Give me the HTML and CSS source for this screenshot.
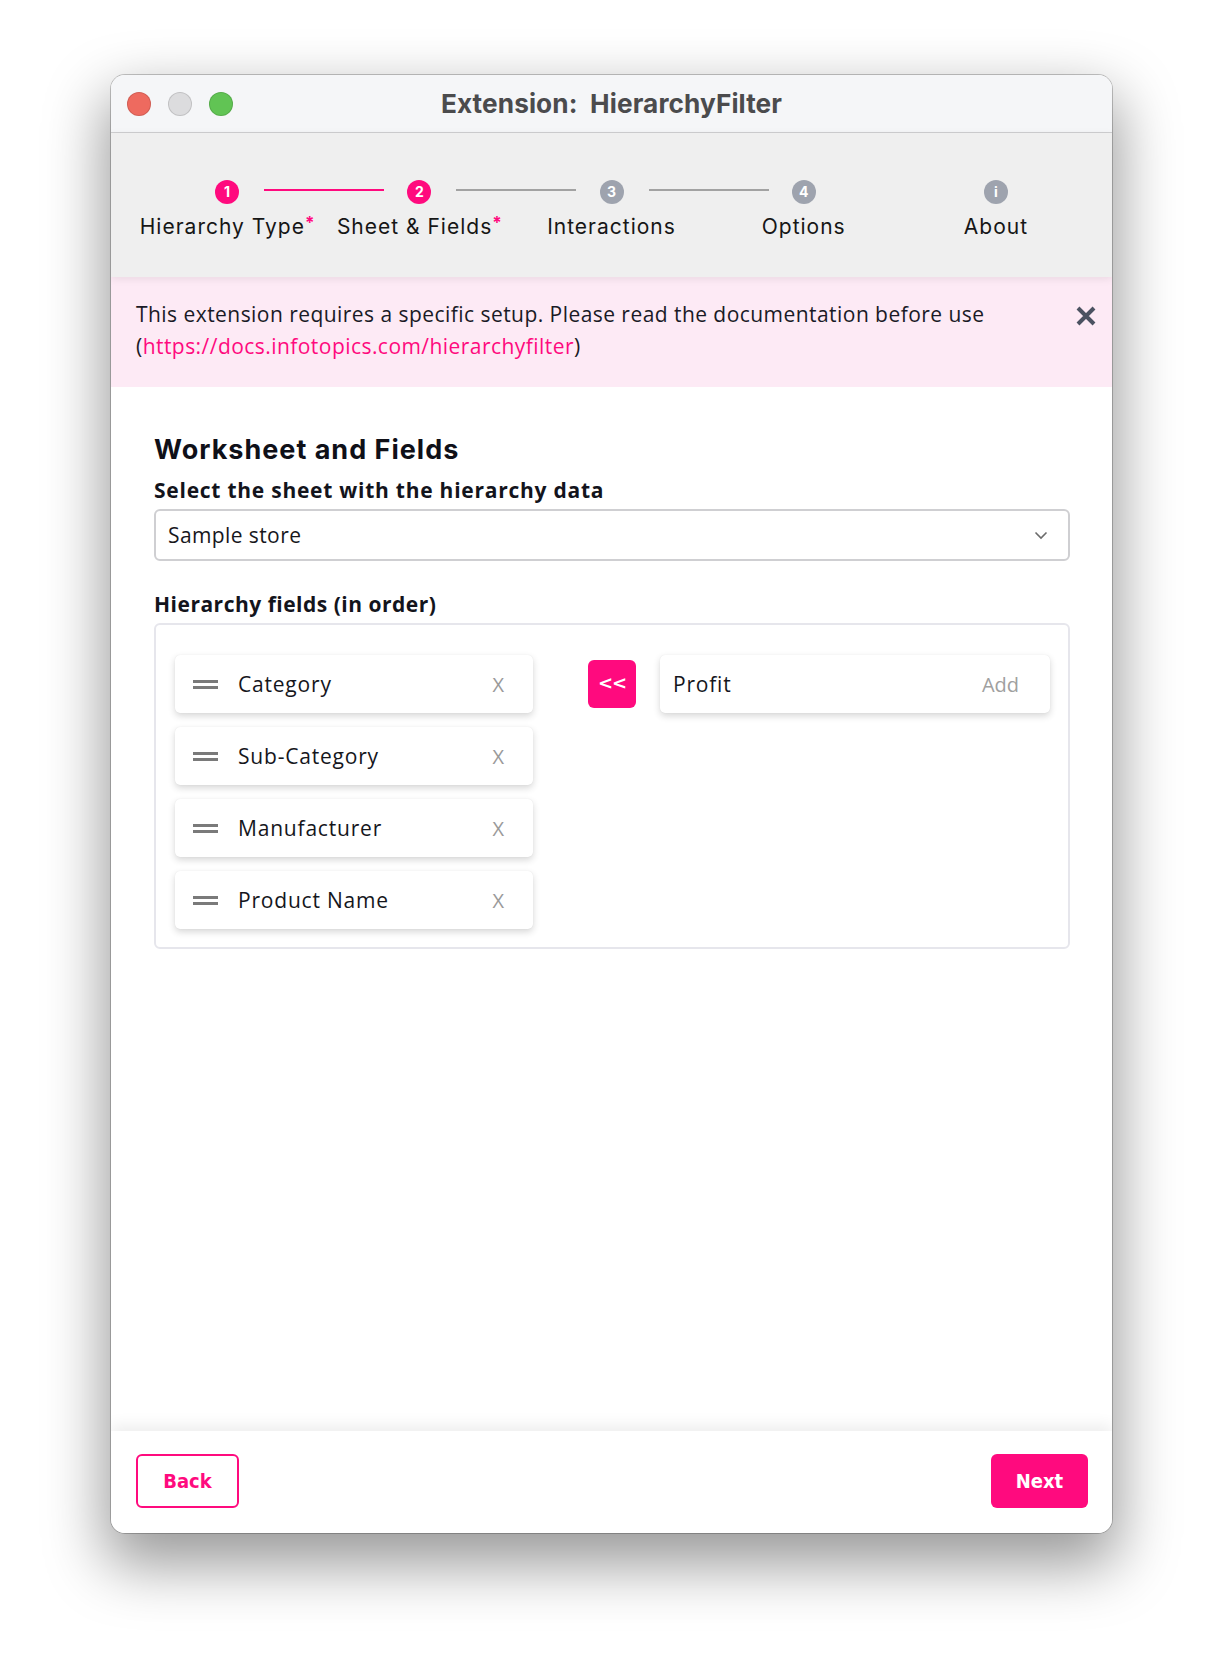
FILE: index.html
```html
<!DOCTYPE html>
<html lang="en">
<head>
<meta charset="utf-8">
<title>Extension: HierarchyFilter</title>
<link rel="stylesheet" href="styles.css">
</head>
<body>
<div class="window">
  <header class="titlebar">
    <div class="lights">
      <span class="light red"></span>
      <span class="light gray"></span>
      <span class="light green"></span>
    </div>
    <div class="title">Extension:&nbsp; HierarchyFilter</div>
  </header>

  <nav class="stepper">
    <div class="step active line-active">
      <div class="dot">1</div>
      <div class="step-label">Hierarchy Type<span class="req">*</span></div>
    </div>
    <div class="step active line">
      <div class="dot">2</div>
      <div class="step-label">Sheet &amp; Fields<span class="req">*</span></div>
    </div>
    <div class="step line">
      <div class="dot">3</div>
      <div class="step-label">Interactions</div>
    </div>
    <div class="step">
      <div class="dot">4</div>
      <div class="step-label">Options</div>
    </div>
    <div class="step">
      <div class="dot">i</div>
      <div class="step-label">About</div>
    </div>
  </nav>

  <div class="banner">
    <p class="banner-text">This extension requires a specific setup. Please read the documentation before use<br>(<a class="link" href="#">https://docs.infotopics.com/hierarchyfilter</a>)</p>
    <button class="banner-close" aria-label="Close">
      <svg width="22" height="22" viewBox="0 0 22 22"><path d="M3 3 L19 19 M19 3 L3 19" stroke="#4b5261" stroke-width="4" stroke-linecap="butt"/></svg>
    </button>
  </div>

  <main class="content">
    <h1 class="heading">Worksheet and Fields</h1>
    <label class="label">Select the sheet with the hierarchy data</label>
    <div class="select">
      <span>Sample store</span>
      <svg class="chev" width="14" height="9" viewBox="0 0 14 9"><path d="M1.5 1.5 L7 7 L12.5 1.5" fill="none" stroke="#6b6b6b" stroke-width="1.6"/></svg>
    </div>

    <label class="label label-fields">Hierarchy fields (in order)</label>
    <div class="fields-box">
      <div class="field-list">
        <div class="field"><span class="handle"></span><span class="field-name">Category</span><span class="field-x">X</span></div>
        <div class="field"><span class="handle"></span><span class="field-name">Sub-Category</span><span class="field-x">X</span></div>
        <div class="field"><span class="handle"></span><span class="field-name">Manufacturer</span><span class="field-x">X</span></div>
        <div class="field"><span class="handle"></span><span class="field-name">Product Name</span><span class="field-x">X</span></div>
      </div>
      <button class="move-btn">&lt;&lt;</button>
      <div class="avail-list">
        <div class="field avail"><span class="field-name">Profit</span><span class="field-add">Add</span></div>
      </div>
    </div>
  </main>

  <footer class="footer">
    <button class="btn btn-outline">Back</button>
    <button class="btn btn-fill">Next</button>
  </footer>
</div>
</body>
</html>
```

FILE: styles.css
```css
* { box-sizing: border-box; }

html, body {
  margin: 0;
  background: #ffffff;
}

body {
  min-height: 1680px;
  padding: 75px 0 147px 111px;
  font-family: "Open Sans", "Noto Sans", sans-serif;
  color: #14151a;
}

.window {
  width: 1001px;
  height: 1458px;
  display: flex;
  flex-direction: column;
  background: #ffffff;
  border-radius: 14px;
  overflow: hidden;
  box-shadow: 0 0 0 1px rgba(0,0,0,0.22), 0 26px 60px 6px rgba(0,0,0,0.4);
}

/* title bar */
.titlebar {
  height: 58px;
  flex: none;
  display: flex;
  align-items: center;
  position: relative;
  background: #f5f6f8;
  border-bottom: 1px solid #cfcfd1;
}
.lights {
  display: flex;
  gap: 17px;
  padding-left: 16px;
}
.light {
  width: 24px;
  height: 24px;
  border-radius: 50%;
  display: block;
}
.light.red { background: #ee6a5f; box-shadow: inset 0 0 0 1px rgba(0,0,0,0.12); }
.light.gray { background: #dcdcde; box-shadow: inset 0 0 0 1px rgba(0,0,0,0.12); }
.light.green { background: #61c454; box-shadow: inset 0 0 0 1px rgba(0,0,0,0.12); }
.title {
  position: absolute;
  left: 0;
  right: 0;
  text-align: center;
  font-family: "Inter", "Liberation Sans", sans-serif;
  font-weight: 700;
  font-size: 26.2px;
  letter-spacing: 0.1px;
  color: #4b4b4d;
  pointer-events: none;
}

/* stepper */
.stepper {
  height: 144px;
  flex: none;
  display: flex;
  padding: 47px 20px 0;
  background: #efefef;
  position: relative;
  z-index: 2;
  box-shadow: 0 2px 8px rgba(0,0,0,0.08);
}
.step {
  flex: 1;
  display: flex;
  flex-direction: column;
  align-items: center;
  position: relative;
}
.step.line::after,
.step.line-active::after {
  content: "";
  position: absolute;
  top: 9px;
  left: calc(50% + 37px);
  width: 120px;
  height: 2px;
  background: #a2a2a2;
}
.step.line-active::after { background: #ff0a7e; }
.dot {
  width: 24px;
  height: 24px;
  border-radius: 50%;
  background: #9ea3ae;
  color: #fff;
  font-family: "Inter", "Liberation Sans", sans-serif;
  font-weight: 700;
  font-size: 14px;
  line-height: 24px;
  text-align: center;
}
.step.active .dot { background: #ff0a7e; }
.step-label {
  margin-top: 10px;
  font-family: "Inter", "Noto Sans", sans-serif;
  font-size: 21px;
  line-height: 26px;
  color: #161616;
  white-space: nowrap;
  letter-spacing: 1px;
}
.req { color: #ff0a7e; font-weight: 700; font-size: 17px; line-height: 0; vertical-align: 5px; letter-spacing: 0; }

/* banner */
.banner {
  height: 110px;
  flex: none;
  display: flex;
  justify-content: space-between;
  align-items: flex-start;
  padding: 21px 15px 0 25px;
  background: #fdeaf5;
  position: relative;
  z-index: 1;
}
.banner-text {
  margin: 0;
  font-size: 21px;
  line-height: 32px;
  letter-spacing: 0.45px;
  color: #1a1a26;
}
.link { color: #ff0a7e; text-decoration: none; }
.banner-close {
  border: 0;
  background: none;
  padding: 0;
  margin-top: 7px;
  width: 22px;
  height: 22px;
}

/* content */
.content {
  flex: 1;
  display: flex;
  flex-direction: column;
  padding: 47px 42px 0 43px;
  background: #fff;
}
.heading {
  margin: 0;
  font-family: "Inter", "Noto Sans", sans-serif;
  font-weight: 700;
  font-size: 27px;
  line-height: 32px;
  letter-spacing: 1px;
  color: #0f1018;
}
.label {
  display: block;
  margin-top: 11px;
  font-weight: 700;
  font-size: 21px;
  line-height: 26px;
  letter-spacing: 0.75px;
  color: #13141c;
}
.label-fields { margin-top: 30px; letter-spacing: 0.5px; }
.select {
  margin-top: 6px;
  height: 52px;
  border: 2px solid #cfcfd2;
  border-radius: 6px;
  display: flex;
  align-items: center;
  justify-content: space-between;
  padding: 0 20px 0 12px;
  font-size: 21px;
  letter-spacing: 0.4px;
  color: #17171c;
}
.fields-box {
  margin-top: 6px;
  border: 2px solid #e6e6ec;
  border-radius: 6px;
  padding: 30px 18px 18px 19px;
  display: flex;
  align-items: flex-start;
}
.field-list {
  width: 358px;
  flex: none;
  display: flex;
  flex-direction: column;
  gap: 14px;
}
.field {
  height: 58px;
  background: #fff;
  border-radius: 5px;
  box-shadow: 0 3px 7px rgba(0,0,0,0.16), 0 0 1px rgba(0,0,0,0.1);
  display: flex;
  align-items: center;
  padding: 0 29px 0 18px;
}
.handle {
  width: 25px;
  height: 9px;
  border-top: 3px solid #7a7a7a;
  border-bottom: 3px solid #7a7a7a;
  flex: none;
}
.field-name {
  margin-left: 20px;
  flex: 1;
  font-size: 21px;
  letter-spacing: 0.8px;
  color: #15161c;
}
.field-x {
  font-size: 20px;
  color: #9a9a9a;
}
.move-btn {
  flex: none;
  width: 48px;
  height: 48px;
  margin: 5px 24px 0 55px;
  border: 0;
  border-radius: 6px;
  background: #ff0a7e;
  color: #fff;
  font-family: "DejaVu Sans", sans-serif;
  font-weight: 700;
  font-size: 18px;
  letter-spacing: -1px;
  padding: 0 0 4px;
}
.avail-list { flex: 1; }
.field.avail { padding: 0 31px 0 13px; }
.field.avail .field-name { margin-left: 0; }
.field-add { font-size: 20px; color: #a0a0a0; }

/* footer */
.footer {
  height: 102px;
  flex: none;
  display: flex;
  align-items: center;
  justify-content: space-between;
  padding: 0 24px 2px 25px;
  background: #fff;
  box-shadow: 0 -6px 14px rgba(0,0,0,0.07);
  position: relative;
}
.btn {
  height: 54px;
  border-radius: 6px;
  font-family: "DejaVu Sans Condensed", "DejaVu Sans", sans-serif;
  font-stretch: condensed;
  font-weight: 700;
  font-size: 20px;
  padding: 0;
}
.btn-outline {
  width: 103px;
  background: #fff;
  border: 2px solid #ff0a7e;
  color: #ff0a7e;
}
.btn-fill {
  width: 97px;
  background: #ff0a7e;
  border: 0;
  color: #fff;
}
```
